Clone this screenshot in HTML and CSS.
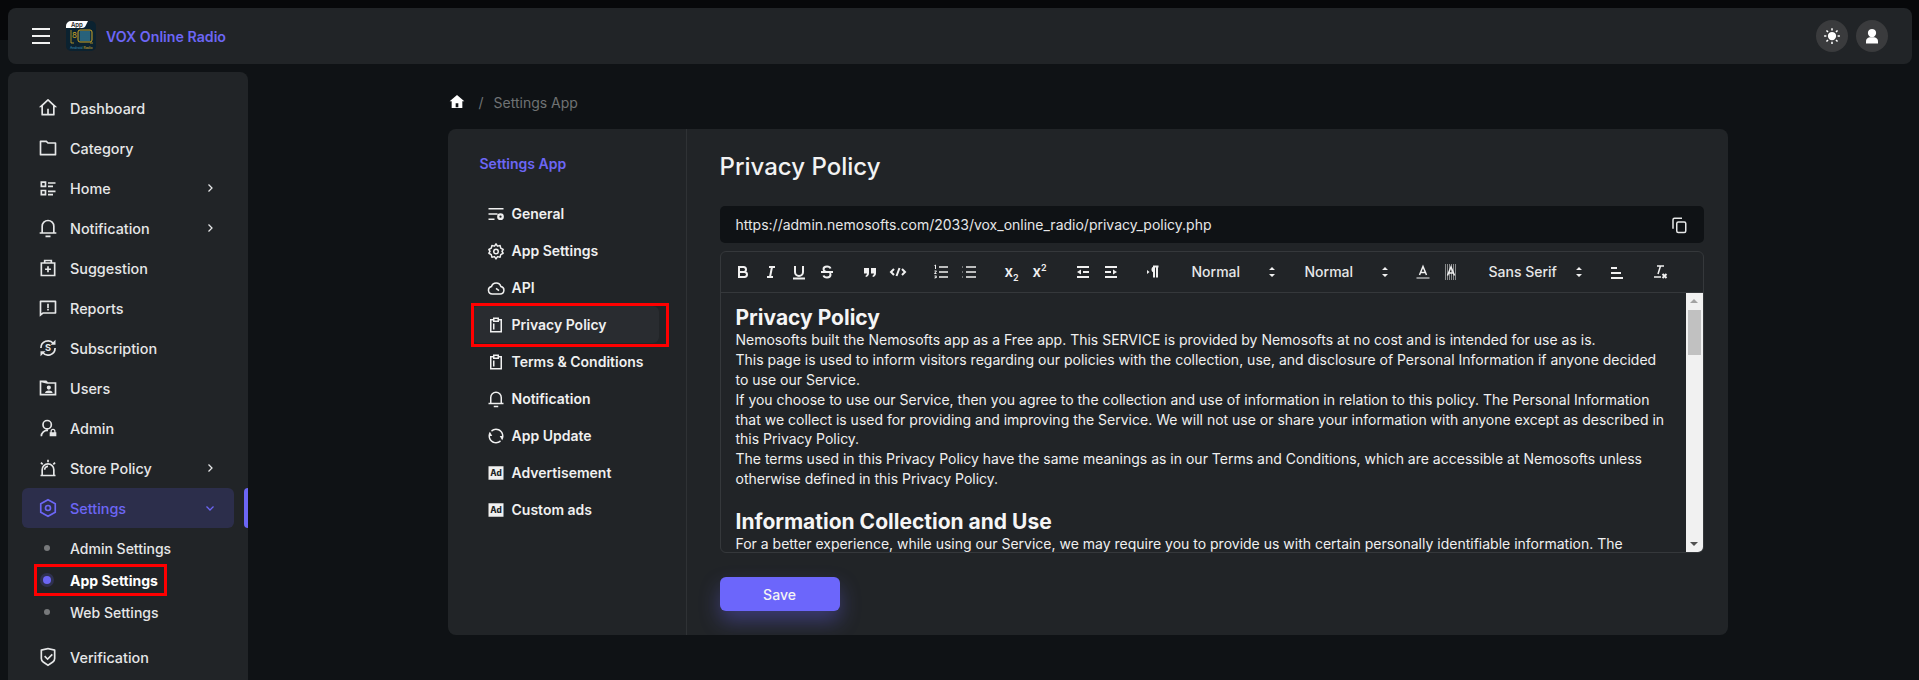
FILE: index.html
```html
<!DOCTYPE html>
<html>
<head>
<meta charset="utf-8">
<title>Settings App</title>
<link rel="stylesheet" href="styles.css">
</head>
<body>
<header class="topbar">
	<div class="burger"><span></span><span></span><span></span></div>
	<svg class="logo" viewBox="0 0 30 30">
		<rect width="30" height="30" rx="5" fill="#0b2230"/>
		<path d="M0 7V5a5 5 0 0 1 5-5h17l-2 4q-1 3-4 3z" fill="#fff"/>
		<text x="5" y="6" font-size="6" font-family="Inter" font-weight="600" fill="#222">App</text>
		<rect x="12" y="9" width="14" height="12" rx="2" fill="#12313f" stroke="#c9a227" stroke-width="1"/>
		<path d="M14 11h10M14 13h10M14 15h10M14 17h10M14 19h10" stroke="#3f93b8" stroke-width="1"/>
		<text x="6" y="17" font-size="8" font-family="Inter" fill="#c9a227">8</text>
		<path d="M5 9v13h3M24 22h3" stroke="#c9a227" stroke-width=".8" fill="none"/>
		<text x="4" y="28" font-size="3.4" font-family="Inter" fill="#3f93b8">Android <tspan fill="#d8b531">Radio</tspan></text>
	</svg>
	<a class="brand">VOX Online Radio</a>
	<div class="top-actions">
		<span class="round-btn">
			<svg class="ico" viewBox="0 0 24 24"><circle cx="12" cy="12" r="5.5" fill="currentColor"/><path d="M12 1.5v3M12 19.500v3M1.500 12h3M19.500 12h3M4.600 4.600l2.100 2.100M17.300 17.300l2.100 2.100M4.600 19.400l2.100-2.100M17.300 6.700l2.100-2.100" stroke="currentColor" stroke-width="2" fill="none"/></svg>
		</span>
		<span class="round-btn">
			<svg class="ico" viewBox="0 0 24 24"><circle cx="12" cy="8" r="5.5" fill="currentColor"/><path d="M4 22v-3q0-4.500 5-5.500h6q5 1 5 5.500v3z" fill="currentColor"/></svg>
		</span>
	</div>
</header>

<div class="layout">
	<aside class="sidebar">
		<a class="side-item"><svg class="ico" viewBox="0 0 24 24"><path d="M19 21H5a1 1 0 0 1-1-1v-9H1l10.327-9.388a1 1 0 0 1 1.346 0L23 11h-3v9a1 1 0 0 1-1 1zm-6-2h5V9.157l-6-5.454-6 5.454V19h5v-6h2v6z"/></svg>Dashboard</a>
		<a class="side-item"><svg class="ico" viewBox="0 0 24 24"><path d="M4 5v14h16V7h-8.414l-2-2H4zm8.414 0H21a1 1 0 0 1 1 1v14a1 1 0 0 1-1 1H3a1 1 0 0 1-1-1V4a1 1 0 0 1 1-1h7.414l2 2z"/></svg>Category</a>
		<a class="side-item"><svg class="ico" viewBox="0 0 24 24"><path d="M3 4h7v7H3zm2 2v3h3V6zM3 14h7v7H3zm2 2v3h3v-3zM12 5h9v2h-9zM12 9h6v2h-6zM12 15h9v2h-9zM12 19h6v2h-6z" fill-rule="evenodd"/></svg>Home<svg class="chev" viewBox="0 0 24 24"><path d="M9 5l7 7-7 7"/></svg></a>
		<a class="side-item"><svg class="ico" viewBox="0 0 24 24"><path d="M20 17h2v2H2v-2h2v-7a8 8 0 1 1 16 0v7zm-2 0v-7a6 6 0 1 0-12 0v7h12zm-9 4h6v2H9v-2z"/></svg>Notification<svg class="chev" viewBox="0 0 24 24"><path d="M9 5l7 7-7 7"/></svg></a>
		<a class="side-item"><svg class="ico" viewBox="0 0 24 24"><path d="M7 2h10v3h4v17H3V5h4zm2 2v1h6V4zM5 7v13h14V7zm6 3h2v2.500h2.500v2H13V17h-2v-2.500H8.500v-2H11z" fill-rule="evenodd"/></svg>Suggestion</a>
		<a class="side-item"><svg class="ico" viewBox="0 0 24 24"><path d="M6.455 19L2 22.500V4a1 1 0 0 1 1-1h18a1 1 0 0 1 1 1v14a1 1 0 0 1-1 1H6.455zm-.692-2H20V5H4v13.385L5.763 17zM11 13h2v2h-2v-2zm0-6h2v5h-2V7z"/></svg>Reports</a>
		<a class="side-item"><svg class="ico" viewBox="0 0 24 24"><path d="M3.500 12a8.500 8.500 0 0 1 15-5.500M20.500 12a8.500 8.500 0 0 1-15 5.500" fill="none" stroke="currentColor" stroke-width="2"/><path d="M15 8h6V2zM9 16H3v6z"/><text x="12" y="16" font-size="11" font-family="Inter" font-weight="700" text-anchor="middle">S</text></svg>Subscription</a>
		<a class="side-item"><svg class="ico" viewBox="0 0 24 24"><path d="M2 3h8l2 2h10v16H2zm2 2v14h16V7h-9zM13 9a2.500 2.500 0 1 1 0 5 2.500 2.500 0 0 1 0-5zm-4.500 9q0-3 4.500-3t4.500 3z" fill-rule="evenodd"/></svg>Users</a>
		<a class="side-item"><svg class="ico" viewBox="0 0 24 24"><path d="M11 2a6 6 0 1 1 0 12 6 6 0 0 1 0-12zm0 2a4 4 0 1 0 0 8 4 4 0 0 0 0-8zM3 22a8 8 0 0 1 9-8v2a6 6 0 0 0-7 6zM15 17v-1a3 3 0 0 1 6 0v1h1v5h-8v-5zm1.500 0h3v-1a1.500 1.500 0 0 0-3 0z" fill-rule="evenodd"/></svg>Admin</a>
		<a class="side-item"><svg class="ico" viewBox="0 0 24 24"><path d="M4 20v-6a8 8 0 1 1 16 0v6h1v2H3v-2h1zm2 0h12v-6a6 6 0 1 0-12 0v6zm5-18h2v3h-2V2zm8.778 2.808l1.414 1.414-2.120 2.121-1.415-1.414 2.121-2.121zM2.808 6.222l1.414-1.414 2.121 2.120L4.930 8.344 2.808 6.222zM7 14a5 5 0 0 1 5-5v2a3 3 0 0 0-3 3H7z"/></svg>Store Policy<svg class="chev" viewBox="0 0 24 24"><path d="M9 5l7 7-7 7"/></svg></a>
		<div class="side-active">
			<a class="side-item side-open"><svg class="ico" viewBox="0 0 24 24"><path d="M12 2l8.700 5v10L12 22l-8.700-5V7z" fill="none" stroke="currentColor" stroke-width="2"/><circle cx="12" cy="12" r="3" fill="none" stroke="currentColor" stroke-width="2"/></svg>Settings<svg class="chev" viewBox="0 0 24 24"><path d="M5 9l7 7 7-7"/></svg></a>
			<span class="side-mark"></span>
		</div>
		<div class="sub-list">
			<a class="sub-item"><span class="dot"></span>Admin Settings</a>
			<a class="sub-item sub-current"><span class="dot"></span>App Settings<span class="redbox"></span></a>
			<a class="sub-item"><span class="dot"></span>Web Settings</a>
		</div>
		<a class="side-item"><svg class="ico" viewBox="0 0 24 24"><path d="M12 1l8.217 1.826a1 1 0 0 1 .783.976v9.987a6 6 0 0 1-2.672 4.992L12 23l-6.328-4.219A6 6 0 0 1 3 13.790V3.802a1 1 0 0 1 .783-.976L12 1zm0 2.049L5 4.604v9.185a4 4 0 0 0 1.781 3.328L12 20.597l5.219-3.480A4 4 0 0 0 19 13.790V4.604L12 3.050zm4.452 5.173l1.415 1.414L11.503 16 7.260 11.757l1.414-1.414 2.828 2.828 4.950-4.950z"/></svg>Verification</a>
	</aside>

	<main class="main">
		<div class="wrap">
			<div class="crumbs">
				<svg class="crumb-home" viewBox="0 0 24 24"><path d="M20 21H4v-10H1L12 1.500 23 11h-3zM10 20h4v-6h-4z" fill-rule="evenodd"/></svg>
				<span class="crumb-sep">/</span>
				<span>Settings App</span>
			</div>
			<section class="card">
				<nav class="tabs">
					<h6 class="tabs-title">Settings App</h6>
					<a class="tab"><svg class="ico" viewBox="0 0 24 24"><path d="M2 4h20v2H2zM2 11h12v2H2zM2 18h8v2H2zM18 11a4.500 4.500 0 1 1 0 9 4.500 4.500 0 0 1 0-9zm0 3a1.500 1.500 0 1 0 0 3 1.500 1.500 0 0 0 0-3z" fill-rule="evenodd"/></svg>General</a>
					<a class="tab"><svg class="ico" viewBox="0 0 24 24"><path d="M12 2.500l2 3 3.500-.7.800 3.400 3.200 1.800-1.500 2.500 1.500 2.500-3.200 1.800-.8 3.400-3.500-.7-2 3-2-3-3.500.7-.8-3.400L2.500 15l1.500-2.500L2.500 10l3.200-1.800.8-3.400 3.500.7z" fill="none" stroke="currentColor" stroke-width="2" stroke-linejoin="round"/><circle cx="12" cy="12.500" r="3" fill="none" stroke="currentColor" stroke-width="2"/></svg>App Settings</a>
					<a class="tab"><svg class="ico" viewBox="0 0 24 24"><path d="M7 20a5 5 0 0 1-1-9.900 6.500 6.500 0 0 1 12.500 0A5 5 0 0 1 17.500 20zM12 12.500l4 3" fill="none" stroke="currentColor" stroke-width="2"/></svg>API</a>
					<a class="tab tab-current"><svg class="ico" viewBox="0 0 24 24"><path d="M8 2h8v2h4v18H4V4h4zm0 4H6v14h12V6h-2v2H8zm2-2v2h4V4zM8 10h2v8H8z" fill-rule="evenodd"/></svg>Privacy Policy<span class="redbox"></span></a>
					<a class="tab"><svg class="ico" viewBox="0 0 24 24"><path d="M8 2h8v2h4v18H4V4h4zm0 4H6v14h12V6h-2v2H8zm2-2v2h4V4zM8 10h2v8H8z" fill-rule="evenodd"/></svg>Terms &amp; Conditions</a>
					<a class="tab"><svg class="ico" viewBox="0 0 24 24"><path d="M20 17h2v2H2v-2h2v-7a8 8 0 1 1 16 0v7zm-2 0v-7a6 6 0 1 0-12 0v7h12zm-9 4h6v2H9v-2z"/></svg>Notification</a>
					<a class="tab"><svg class="ico" viewBox="0 0 24 24"><path d="M5.463 4.433A9.961 9.961 0 0 1 12 2c5.523 0 10 4.477 10 10 0 2.136-.670 4.116-1.810 5.740L17 12h3A8 8 0 0 0 6.460 6.228l-.997-1.795zm13.074 15.134A9.961 9.961 0 0 1 12 22C6.477 22 2 17.523 2 12c0-2.136.670-4.116 1.810-5.740L7 12H4a8 8 0 0 0 13.540 5.772l.997 1.795z"/></svg>App Update</a>
					<a class="tab"><svg class="ico" viewBox="0 0 24 24"><rect x="2" y="3" width="20" height="18" fill="currentColor"/><text x="12" y="16" font-size="11" font-family="Inter" font-weight="800" text-anchor="middle" fill="#212427">Ad</text></svg>Advertisement</a>
					<a class="tab"><svg class="ico" viewBox="0 0 24 24"><rect x="2" y="3" width="20" height="18" fill="currentColor"/><text x="12" y="16" font-size="11" font-family="Inter" font-weight="800" text-anchor="middle" fill="#212427">Ad</text></svg>Custom ads</a>
				</nav>

				<div class="pane">
					<h4 class="pane-title">Privacy Policy</h4>
					<div class="url-bar">
						<span>https://admin.nemosofts.com/2033/vox_online_radio/privacy_policy.php</span>
						<svg class="copy" viewBox="0 0 24 24"><path d="M5 16H4V5a2 2 0 0 1 2-2h9v1" fill="none" stroke="currentColor" stroke-width="2"/><rect x="9" y="8" width="12" height="14" rx="2" fill="none" stroke="currentColor" stroke-width="2"/></svg>
					</div>

					<div class="editor">
						<div class="toolbar">
							<div class="tool-group">
								<button class="tool"><svg viewBox="0 0 18 18"><path d="M5 4h4.500a2.500 2.500 0 0 1 0 5H5zM5 9h5.500a2.500 2.500 0 0 1 0 5H5z"/></svg></button>
								<button class="tool"><svg viewBox="0 0 18 18"><path d="M7 4h6M5 14h6M8 14l2-10"/></svg></button>
								<button class="tool"><svg viewBox="0 0 18 18"><path d="M5 3v6a4 4 0 0 0 8 0V3M3 15.500h12"/></svg></button>
								<button class="tool"><svg viewBox="0 0 18 18"><path d="M12.500 5.500C12 4 10.500 3.500 9 3.500c-2 0-3.500 1-3.500 2.700 0 1.300 1 2 2.500 2.800M5.500 12.500c.5 1.500 2 2 3.500 2 2 0 3.500-1 3.500-2.700 0-.8-.3-1.400-.8-1.800M3 9h12"/></svg></button>
							</div>
							<div class="tool-group">
								<button class="tool"><svg viewBox="0 0 18 18"><path class="solid" d="M3 5h5v5q0 3-3 4l-.7-1q1.500-1 1.700-2.500H3zM10 5h5v5q0 3-3 4l-.7-1q1.500-1 1.700-2.500H10z"/></svg></button>
								<button class="tool"><svg viewBox="0 0 18 18"><path d="M5 6L2 9l3 3M13 6l3 3-3 3M10.500 5l-3 8"/></svg></button>
							</div>
							<div class="tool-group">
								<button class="tool"><svg viewBox="0 0 18 18"><path d="M7 4h9M7 9h9M7 14h9" stroke-width="1.700"/><path d="M2.500 2.500l1-.5v4M2.500 8h2l-2 2.500h2M2.500 13h2l-1 1.500h1l-2 .5" stroke-width="1"/></svg></button>
								<button class="tool"><svg viewBox="0 0 18 18"><path d="M6 4h10M6 9h10M6 14h10M2.500 4h.5M2.500 9h.5M2.500 14h.5" stroke-width="1.700"/></svg></button>
							</div>
							<div class="tool-group">
								<button class="tool script"><span>x<sub>2</sub></span></button>
								<button class="tool script"><span>x<sup>2</sup></span></button>
							</div>
							<div class="tool-group">
								<button class="tool"><svg viewBox="0 0 18 18"><path d="M3 4h12M9 9h6M3 14h12"/><path class="solid" d="M7 6.500v5L3 9z"/></svg></button>
								<button class="tool"><svg viewBox="0 0 18 18"><path d="M3 4h12M3 9h6M3 14h12"/><path class="solid" d="M11 6.500v5L15 9z"/></svg></button>
							</div>
							<div class="tool-group">
								<button class="tool"><svg viewBox="0 0 18 18"><path class="solid" d="M2 7l2.500 2L2 11z"/><path d="M9 3.500v11M12 3.500v11M8 3.500h5.500"/><path class="solid" d="M9.500 3.500a3 3 0 1 0 0 6z"/></svg></button>
							</div>
							<div class="tool-group"><div class="picker">Normal<svg class="updown" viewBox="0 0 18 18"><path d="M6 7l3-3 3 3zM6 11l3 3 3-3z"/></svg></div></div>
							<div class="tool-group"><div class="picker">Normal<svg class="updown" viewBox="0 0 18 18"><path d="M6 7l3-3 3 3zM6 11l3 3 3-3z"/></svg></div></div>
							<div class="tool-group">
								<button class="tool"><svg viewBox="0 0 18 18"><path d="M5.500 12L9 3.500l3.500 8.500M6.500 9.500h5" stroke-width="1.500"/><path class="muted" d="M2.500 15h13"/></svg></button>
								<button class="tool"><svg viewBox="0 0 18 18"><path class="hatch" d="M3 2h12M3 4h12M3 6h12M3 8h12M3 10h12M3 12h12M3 14h12M3 16h12"/><path d="M5.500 12.500L9 4l3.500 8.500M6.500 10h5" stroke-width="1.500"/></svg></button>
							</div>
							<div class="tool-group"><div class="picker picker-wide">Sans Serif<svg class="updown" viewBox="0 0 18 18"><path d="M6 7l3-3 3 3zM6 11l3 3 3-3z"/></svg></div></div>
							<div class="tool-group">
								<button class="tool"><svg viewBox="0 0 18 18"><path d="M3 5h6M3 10h10M3 15h12"/></svg></button>
							</div>
							<div class="tool-group">
								<button class="tool"><svg viewBox="0 0 18 18"><path d="M6 3h7M9.500 3L7 11M3 14h7" stroke-width="1.500"/><path d="M11.500 11l4 4M15.500 11l-4 4"/></svg></button>
							</div>
						</div>
						<div class="editor-body">
							<div class="doc">
								<h2>Privacy Policy</h2>
								<p>Nemosofts built the Nemosofts app as a Free app. This SERVICE is provided by Nemosofts at no cost and is intended for use as is.</p>
								<p>This page is used to inform visitors regarding our policies with the collection, use, and disclosure of Personal Information if anyone decided to use our Service.</p>
								<p>If you choose to use our Service, then you agree to the collection and use of information in relation to this policy. The Personal Information that we collect is used for providing and improving the Service. We will not use or share your information with anyone except as described in this Privacy Policy.</p>
								<p>The terms used in this Privacy Policy have the same meanings as in our Terms and Conditions, which are accessible at Nemosofts unless otherwise defined in this Privacy Policy.</p>
								<p><br></p>
								<h2>Information Collection and Use</h2>
								<p>For a better experience, while using our Service, we may require you to provide us with certain personally identifiable information. The</p>
							</div>
							<div class="scrollbar">
								<span class="arrow-up"></span>
								<span class="thumb"></span>
								<span class="arrow-down"></span>
							</div>
						</div>
					</div>

					<button class="save">Save</button>
				</div>
			</section>
		</div>
	</main>
</div>
</body>
</html>
```

FILE: styles.css
```css
html, body {
	height: 680px;
	overflow: hidden;
}
body {
	margin: 0;
	background: linear-gradient(#07080a 40px, #0f1215 40px);
	font-family: Inter, "Liberation Sans", sans-serif;
	font-size: 14px;
	color: #e6e7e8;
}
.ico {
	width: 20px;
	height: 20px;
	fill: currentColor;
	flex: none;
}

/* top bar */
.topbar {
	display: flex;
	align-items: center;
	height: 56px;
	margin: 8px 7px 8px 8px;
	padding: 0 24px;
	background: #212427;
	border-radius: 8px;
}
.burger {
	display: flex;
	flex-direction: column;
	justify-content: space-between;
	width: 18px;
	height: 16px;
	margin-right: 16px;
}
.burger span {
	height: 2px;
	background: #f1f1f1;
}
.logo {
	width: 30px;
	height: 30px;
	margin-right: 10px;
}
.brand {
	font-size: 14.2px;
	font-weight: 600;
	color: #6c66f5;
}
.top-actions {
	display: flex;
	gap: 8px;
	margin-left: auto;
}
.round-btn {
	display: flex;
	align-items: center;
	justify-content: center;
	width: 32px;
	height: 32px;
	border-radius: 50%;
	background: #3a3b3d;
	color: #fff;
}
.round-btn .ico {
	width: 18px;
	height: 18px;
}

/* sidebar */
.layout {
	display: flex;
}
.sidebar {
	flex: none;
	width: 240px;
	height: 608px;
	margin-left: 8px;
	padding-top: 16px;
	box-sizing: border-box;
	background: #212427;
	border-radius: 8px 8px 0 0;
	overflow: hidden;
}
.side-item {
	display: flex;
	align-items: center;
	gap: 12px;
	height: 40px;
	margin: 0 14px;
	padding: 0 16px;
	font-size: 14.4px;
	font-weight: 500;
	border-radius: 6px;
}
.chev {
	width: 12px;
	height: 12px;
	margin-left: auto;
	margin-right: 2px;
	fill: none;
	stroke: currentColor;
	stroke-width: 2.5;
}
.side-active {
	position: relative;
}
.side-open {
	background: #2c2e4b;
	color: #6c66f5;
}
.side-mark {
	position: absolute;
	right: 0;
	top: 0;
	width: 4px;
	height: 40px;
	background: #6c66f5;
	border-radius: 4px 0 0 4px;
}
.sub-list {
	padding: 4px 0 9px;
}
.sub-item {
	position: relative;
	display: flex;
	align-items: center;
	height: 32px;
	margin: 0 14px;
	padding-left: 16px;
	font-weight: 500;
	font-size: 14px;
}
.dot {
	width: 6px;
	height: 6px;
	margin: 0 20px 0 6px;
	border-radius: 50%;
	background: #77797b;
}
.sub-current {
	font-weight: 700;
	color: #fff;
}
.sub-current .dot {
	width: 8px;
	height: 8px;
	margin: 0 19px 0 5px;
	background: #6c66f5;
	box-shadow: 0 0 0 3px #2f3150;
}
.redbox {
	position: absolute;
	border: 3px solid #f00;
	box-sizing: border-box;
	pointer-events: none;
}
.sub-current .redbox {
	left: 12px;
	top: 0;
	width: 133px;
	height: 32px;
}

/* main */
.main {
	flex: 1;
	margin-left: 8px;
	min-width: 0;
}
.wrap {
	width: 1280px;
	margin: 0 auto;
}
.crumbs {
	display: flex;
	align-items: center;
	height: 22px;
	margin: 19px 0 16px;
	padding-left: 1px;
	color: #6f7274;
}
.crumb-home {
	width: 16px;
	height: 16px;
	fill: #fff;
}
.crumb-sep {
	margin: 0 10px 0 14px;
}
.card {
	display: flex;
	height: 506px;
	background: #212427;
	border-radius: 8px;
	overflow: hidden;
}
.tabs {
	flex: none;
	width: 239px;
	padding: 0 24px;
	box-sizing: border-box;
	border-right: 1px solid #2f3235;
}
.tabs-title {
	margin: 26px 0 22px;
	padding-left: 8px;
	font-size: 14px;
	font-weight: 600;
	color: #6c66f5;
	line-height: 18px;
}
.tab {
	position: relative;
	display: flex;
	align-items: center;
	gap: 7px;
	height: 37px;
	padding-left: 15px;
	font-weight: 600;
	font-size: 14px;
	color: #f0f0f0;
}
.tab .ico {
	width: 18px;
	height: 18px;
}
.tab-current {
	background: #292c30;
	border-radius: 6px;
	margin-right: 3px;
}
.tab-current .redbox {
	left: -1px;
	top: -3px;
	width: 198px;
	height: 44px;
}

/* right pane */
.pane {
	flex: 1;
	min-width: 0;
	padding: 23px 24px 0 33px;
}
.pane-title {
	margin: 0 0 25px;
	font-size: 24px;
	font-weight: 500;
	line-height: 29px;
	color: #f2f2f2;
}
.url-bar {
	display: flex;
	align-items: center;
	justify-content: space-between;
	height: 37px;
	padding: 0 16px;
	background: #0f1215;
	border-radius: 5px;
	font-size: 14px;
}
.copy {
	width: 18px;
	height: 18px;
}
.editor {
	margin-top: 8px;
	border: 1px solid #35383b;
	border-radius: 6px;
	overflow: hidden;
}
.toolbar {
	display: flex;
	align-items: center;
	height: 41px;
	padding: 0 8px 1px;
	box-sizing: border-box;
	border-bottom: 1px solid #35383b;
}
.tool-group {
	display: flex;
	margin-right: 15px;
}
.tool {
	display: flex;
	align-items: center;
	justify-content: center;
	width: 28px;
	height: 24px;
	padding: 3px 5px;
	background: none;
	border: 0;
	color: #f0f0f0;
	font-family: inherit;
}
.tool svg {
	width: 18px;
	height: 18px;
	fill: none;
	stroke: #f0f0f0;
	stroke-width: 2;
}
.tool .solid {
	fill: #f0f0f0;
	stroke: none;
}
.tool .muted {
	stroke: #8a8c8e;
}
.tool .hatch {
	stroke-width: 1;
	stroke-dasharray: 1 1;
}
.script {
	font-size: 15px;
	font-weight: 600;
	line-height: 18px;
}
.script sub, .script sup {
	font-size: 9px;
	line-height: 0;
}
.picker {
	display: flex;
	align-items: center;
	justify-content: space-between;
	width: 98px;
	height: 24px;
	padding-left: 9px;
	box-sizing: border-box;
	font-weight: 500;
	font-size: 14px;
}
.picker-wide {
	width: 108px;
}
.updown {
	width: 18px;
	height: 18px;
	fill: #f0f0f0;
}
.editor-body {
	display: flex;
	height: 259px;
}
.doc {
	flex: 1;
	min-width: 0;
	padding: 12px 15px;
	overflow: hidden;
	line-height: 1.42;
	color: #f0f0f0;
}
.doc h2 {
	margin: 0;
	font-size: 21px;
	font-weight: 700;
	line-height: 25px;
	color: #f5f5f5;
}
.doc p {
	margin: 0;
}
.scrollbar {
	position: relative;
	flex: none;
	width: 17px;
	background: #f1f1f1;
}
.thumb {
	position: absolute;
	left: 2px;
	top: 17px;
	width: 13px;
	height: 45px;
	background: #c1c1c1;
}
.arrow-up, .arrow-down {
	position: absolute;
	left: 4px;
	border-left: 4px solid transparent;
	border-right: 4px solid transparent;
}
.arrow-up {
	top: 6px;
	border-bottom: 4px solid #a3a3a3;
}
.arrow-down {
	bottom: 6px;
	border-top: 4px solid #505050;
}
.save {
	display: block;
	width: 120px;
	height: 34px;
	margin-top: 24px;
	background: #6c66fb;
	border: 0;
	border-radius: 6px;
	color: #f4f4f4;
	font-family: inherit;
	font-size: 14px;
	font-weight: 500;
	box-shadow: 0 10px 20px rgba(108, 102, 251, .35);
}
```
